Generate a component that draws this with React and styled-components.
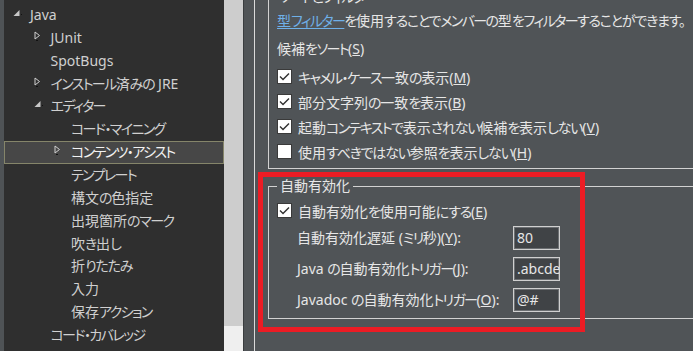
import React from "react";
import styled, { createGlobalStyle } from "styled-components";

const Global = createGlobalStyle`
  html, body { margin: 0; padding: 0; overflow: hidden; background: #505457; }
  #root { width: 693px; height: 351px; }
  * { box-sizing: border-box; }
`;

const Window = styled.div`
  display: flex;
  width: 693px;
  height: 351px;
  overflow: hidden;
  position: relative;
  font-family: "Noto Sans", "Noto Sans CJK JP", sans-serif;
  font-size: 14px;
  font-feature-settings: "palt";
`;

const Run = styled.span`
  letter-spacing: ${(p) => p.$ls}px;
`;

/* Renders Japanese text with kana runs tightened (the reference UI font has narrow kana). */
const T = ({ children }) => {
  const parts = String(children).match(/[\u3000-\u309f]+|[\u30a0-\u30ff]+|[^\u3000-\u30ff]+/g) || [];
  return parts.map((s, i) => {
    let ls = 0;
    if (/[\u3000-\u309f]/.test(s)) ls = -1.2;
    else if (/[\u30a0-\u30ff]/.test(s)) ls = -1.6;
    return (
      <Run key={i} $ls={ls}>
        {s}
      </Run>
    );
  });
};

const Strip = styled.div`
  width: 4px;
  flex: none;
  background: #4f5356;
`;

const Tree = styled.div`
  width: 220px;
  flex: none;
  background: #2f2f2f;
  padding-top: 3.6px;
  overflow: hidden;
`;

const Row = styled.div`
  height: 22.86px;
  display: flex;
  align-items: center;
  padding-left: ${(p) => 8 + p.$level * 20.5}px;
  color: ${(p) => (p.$selected ? "#f2f2f2" : "#d0d0d0")};
  background: ${(p) => (p.$selected ? "#474747" : "transparent")};
  border: 1px solid ${(p) => (p.$selected ? "#85856a" : "transparent")};
  white-space: nowrap;
  line-height: 20px;
`;

const Toggle = styled.span`
  width: 17px;
  flex: none;
  display: flex;
  align-items: center;
  height: 20px;
  svg { display: block; margin-top: -4px; }
`;

const Scrollbar = styled.div`
  width: 20px;
  flex: none;
  display: flex;
  flex-direction: column;
  border-right: 1px solid #3a3d3f;
  background: #efefef;
`;

const Thumb = styled.div`
  height: 326px;
  background: #cdcdcd;
`;

const Sash = styled.div`
  width: 10px;
  flex: none;
  background: #505457;
`;

const Pane = styled.div`
  flex: 1;
  min-width: 0;
  border-left: 1px solid #dadada;
  background: #505457;
  padding-left: 13px;
  color: #e6e6e6;
  overflow: hidden;
`;

const Group = styled.fieldset`
  margin: ${(p) => p.$mt}px 0 0 0;
  padding: ${(p) => p.$pt}px 0 ${(p) => p.$pb}px 8px;
  border: 1px solid #d2d2d2;
  border-right: none;
  min-width: 0;
`;

const Legend = styled.legend`
  padding: 0 3px;
  margin-left: 0;
  line-height: 20px;
  color: #e6e6e6;
`;

const Line = styled.div`
  line-height: 20px;
  height: 20px;
  white-space: nowrap;
  margin-top: ${(p) => p.$mt || 0}px;
`;

const Link = styled.span`
  color: #6fb0e8;
  text-decoration: underline;
  text-underline-offset: 2px;
`;

const CheckRow = styled.div`
  height: 25px;
  display: flex;
  align-items: center;
  gap: 6px;
  white-space: nowrap;
  svg { display: block; flex: none; }
`;

const Fields = styled.div`
  display: grid;
  grid-template-columns: 216px 47px;
  row-gap: 7px;
  padding-left: 20px;
  margin-top: 3px;
`;

const FieldLabel = styled.label`
  height: 24px;
  line-height: 24px;
  white-space: nowrap;
`;

const Input = styled.div`
  height: 24px;
  width: 47px;
  background: #404346;
  border: 1px solid #d0d0d0;
  box-shadow: inset 0 0 0 1px #6c6f72;
  color: #e6e6e6;
  line-height: 22px;
  padding-left: 3px;
  overflow: hidden;
  white-space: nowrap;
`;

const Highlight = styled.div`
  position: absolute;
  left: 258px;
  top: 172px;
  width: 327px;
  height: 160px;
  border: 5px solid #ec1c24;
  pointer-events: none;
`;

const Expanded = () => (
  <svg width="9" height="8" viewBox="0 0 9 8">
    <polygon points="6.5,1 6.5,7 0.5,7" fill="#c8c8c8" />
    <rect x="8" y="5" width="1" height="1" fill="#111" />
  </svg>
);

const Collapsed = () => (
  <svg width="7" height="10" viewBox="0 0 7 10">
    <polygon points="1,1 5.5,4.5 1,8" fill="none" stroke="#cfcfcf" strokeWidth="1" />
    <rect x="2" y="9" width="2" height="1" fill="#111" />
  </svg>
);

const Check = ({ checked }) => (
  <svg width="15" height="15" viewBox="0 0 15 15">
    <rect x="0.5" y="0.5" width="14" height="14" fill="#ffffff" stroke="#3a3a3a" />
    {checked && (
      <path d="M3 7.6 L6 10.6 L12 4.4" fill="none" stroke="#333" strokeWidth="1.4" />
    )}
  </svg>
);

const tree = [
  { label: "Java", level: 0, toggle: "open" },
  { label: "JUnit", level: 1, toggle: "closed" },
  { label: "SpotBugs", level: 1 },
  { label: "インストール済みの JRE", level: 1, toggle: "closed" },
  { label: "エディター", level: 1, toggle: "open" },
  { label: "コード・マイニング", level: 2 },
  { label: "コンテンツ・アシスト", level: 2, toggle: "closed", selected: true },
  { label: "テンプレート", level: 2 },
  { label: "構文の色指定", level: 2 },
  { label: "出現箇所のマーク", level: 2 },
  { label: "吹き出し", level: 2 },
  { label: "折りたたみ", level: 2 },
  { label: "入力", level: 2 },
  { label: "保存アクション", level: 2 },
  { label: "コード・カバレッジ", level: 1 },
];

const sortOptions = [
  { pre: "キャメル・ケース一致の表示(", key: "M", checked: true },
  { pre: "部分文字列の一致を表示(", key: "B", checked: true },
  { pre: "起動コンテキストで表示されない候補を表示しない(", key: "V", checked: true },
  { pre: "使用すべきではない参照を表示しない(", key: "H", checked: false },
];

const fields = [
  { pre: "自動有効化遅延 (ミリ秒)(", key: "Y", value: "80" },
  { pre: "Java の自動有効化トリガー(", key: "J", value: ".abcdefghijklmnopqrstuvwxyz" },
  { pre: "Javadoc の自動有効化トリガー(", key: "O", value: "@#" },
];

export default function App() {
  return (
    <>
      <Global />
      <Window>
        <Strip />
        <Tree>
          {tree.map((t) => (
            <Row key={t.label} $level={t.level} $selected={t.selected}>
              <Toggle>
                {t.toggle === "open" && <Expanded />}
                {t.toggle === "closed" && <Collapsed />}
              </Toggle>
              <span>
                <T>{t.label}</T>
              </span>
            </Row>
          ))}
        </Tree>
        <Scrollbar>
          <Thumb />
        </Scrollbar>
        <Sash />
        <Pane>
          <Group $mt={-13} $pt={4} $pb={4}>
            <Legend>
              <T>ソートとフィルター</T>
            </Legend>
            <Line>
              <Link>
                <T>型フィルター</T>
              </Link>
              <T>を使用することでメンバーの型をフィルターすることができます。</T>
            </Line>
            <Line $mt={8}>
              <T>候補をソート(</T>
              <u>S</u>)
            </Line>
            <div style={{ height: 5 }} />
            {sortOptions.map((o) => (
              <CheckRow key={o.key}>
                <Check checked={o.checked} />
                <span>
                  <T>{o.pre}</T>
                  <u>{o.key}</u>)
                </span>
              </CheckRow>
            ))}
          </Group>
          <Group $mt={7} $pt={2} $pb={6}>
            <Legend>
              <T>自動有効化</T>
            </Legend>
            <CheckRow>
              <Check checked />
              <span>
                <T>自動有効化を使用可能にする(</T>
                <u>E</u>)
              </span>
            </CheckRow>
            <Fields>
              {fields.map((f) => (
                <React.Fragment key={f.key}>
                  <FieldLabel>
                    <T>{f.pre}</T>
                    <u>{f.key}</u>):
                  </FieldLabel>
                  <Input>{f.value}</Input>
                </React.Fragment>
              ))}
            </Fields>
          </Group>
        </Pane>
        <Highlight />
      </Window>
    </>
  );
}
